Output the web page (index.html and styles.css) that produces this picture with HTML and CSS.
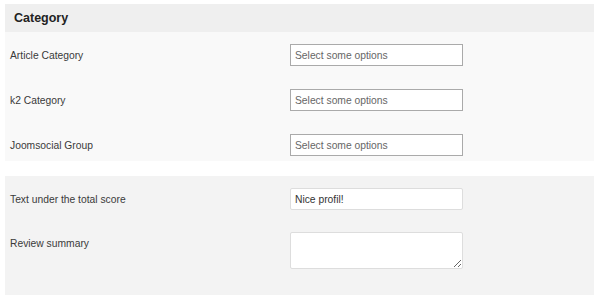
FILE: index.html
```html
<!DOCTYPE html>
<html>
	<head>
		<title>Category</title>
		<link rel="stylesheet" href="styles.css">
	</head>
	<body>
		<div class="page">
			<div class="panel panel-category">
				<div class="panel-head">Category</div>
				<div class="panel-body">
					<div class="row">
						<label>Article Category</label>
						<div class="chosen">Select some options</div>
					</div>
					<div class="row">
						<label>k2 Category</label>
						<div class="chosen">Select some options</div>
					</div>
					<div class="row">
						<label>Joomsocial Group</label>
						<div class="chosen">Select some options</div>
					</div>
				</div>
			</div>

			<div class="panel panel-review">
				<div class="row">
					<label>Text under the total score</label>
					<input type="text" class="text" value="Nice profil!">
				</div>
				<div class="row">
					<label>Review summary</label>
					<textarea class="summary"></textarea>
				</div>
			</div>
		</div>
	</body>
</html>
```

FILE: styles.css
```css
body {
	margin: 0;
	background-color: #fff;
	font-family: "Liberation Sans", Arial, sans-serif;
	color: #3a3a3a;
}

div.page {
	padding: 4px 6px 0 5px;
	display: flex;
	flex-direction: column;
	gap: 15px;
}

div.panel-head {
	background-color: #efefef;
	height: 28px;
	line-height: 28px;
	padding-left: 9px;
	font-size: 12.5px;
	font-weight: bold;
	color: #222;
}

div.panel-category div.panel-body {
	background-color: #f9f9f9;
	padding: 12px 0 5px 0;
	display: flex;
	flex-direction: column;
	gap: 23px;
}

div.panel-review {
	background-color: #f3f3f3;
	padding: 12px 0 26px 0;
	display: flex;
	flex-direction: column;
	gap: 22px;
}

div.row {
	display: grid;
	grid-template-columns: 285px 173px;
	align-items: start;
}

div.row label {
	box-sizing: border-box;
	height: 22px;
	padding: 2px 0 0 5px;
	font-size: 10.3px;
	line-height: 20px;
}

div.chosen {
	box-sizing: border-box;
	height: 22px;
	line-height: 22px;
	padding-left: 4px;
	border: 1px solid #aaa;
	background-color: #fff;
	font-size: 10.3px;
	color: #666;
}

input.text,
textarea.summary {
	box-sizing: border-box;
	margin: 0;
	width: 173px;
	border: 1px solid #ddd;
	border-radius: 2px;
	background-color: #fff;
	font-family: "Liberation Sans", Arial, sans-serif;
	font-size: 10.3px;
	color: #333;
	outline: none;
}

input.text {
	height: 22px;
	padding: 1px 4px 0 4px;
}

textarea.summary {
	display: block;
	height: 37px;
	resize: vertical;
}
```
